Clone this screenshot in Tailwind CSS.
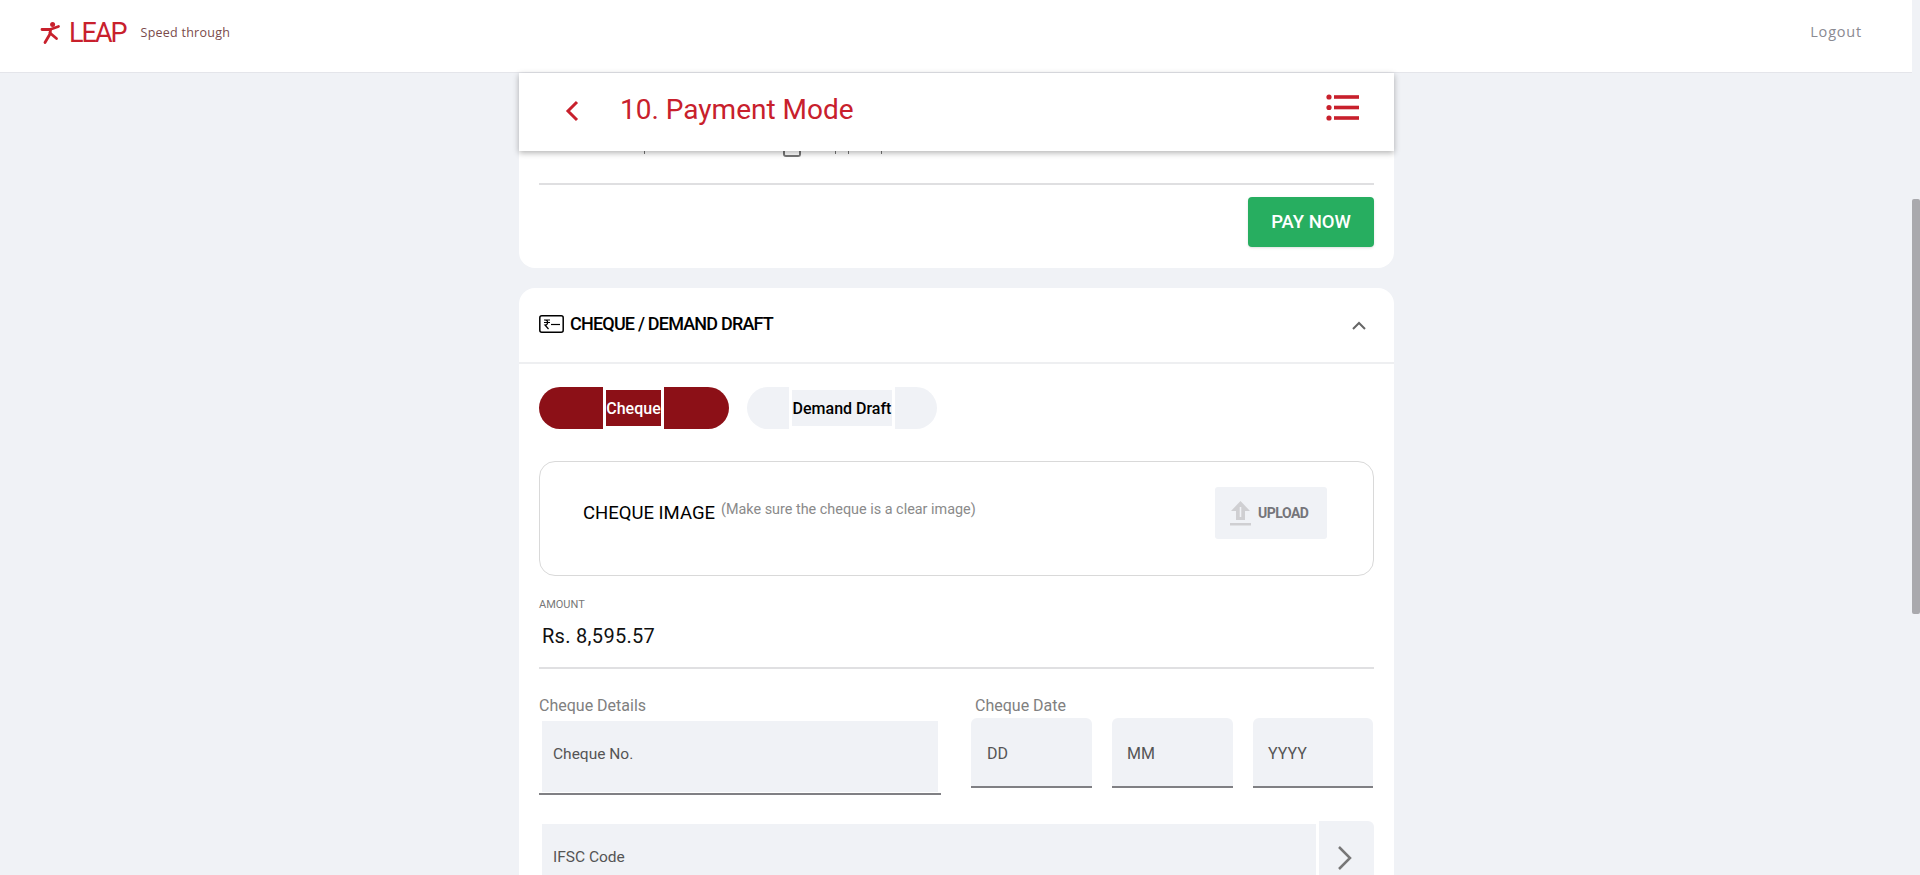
<!DOCTYPE html>
<html lang="en">
<head>
<meta charset="utf-8">
<title>LEAP - Payment Mode</title>
<script src="https://cdn.jsdelivr.net/npm/@tailwindcss/browser@4"></script>
</head>
<body class="h-[875px] overflow-hidden bg-[#f0f2f6] font-['Roboto',sans-serif]">
<div class="flex h-[875px]">
  <div class="w-[1912px] h-[875px] overflow-hidden">
    <header class="h-[73px] bg-white border-b border-[#e4e5ea] flex items-center">
      <svg class="ml-[40px] mt-[-7px] w-[24px] h-[24px] text-[#c8202c]" viewBox="0 0 24 24" fill="none" stroke="currentColor" stroke-width="2.8" stroke-linecap="round" stroke-linejoin="round">
        <circle cx="12.6" cy="3.4" r="2.5" fill="currentColor" stroke="none"/>
        <path d="M2 8.5H10L18.5 5.5"/>
        <path d="M10.5 8.5L10 13L5 21.5"/>
        <path d="M10 12L16.5 17.5"/>
      </svg>
      <span class="ml-[5px] mt-[-7px] text-[27px] leading-[32px] font-normal tracking-[-2px] text-[#c8202c]">LEAP</span>
      <span class="ml-[15px] mt-[7px] mb-[14px] text-[12.5px] leading-[20px] tracking-[0.25px] text-[#7a4a4a] font-['Open_Sans',sans-serif]">Speed through</span>
      <span class="ml-auto mr-[50px] mt-[-9px] text-[14.5px] leading-[20px] tracking-[0.8px] text-[#8a8a92] font-['Open_Sans',sans-serif]">Logout</span>
    </header>

    <main class="ml-[519px] w-[875px]">
      <div class="relative z-10 h-[78px] bg-white shadow-[0_2px_6px_rgba(0,0,0,0.3)] flex items-center">
        <svg class="ml-[46px] mb-[3px] w-[14px] h-[22px] text-[#c8202c]" viewBox="0 0 14 22" fill="none" stroke="currentColor" stroke-width="3"><path d="M12 2L3 11L12 20"/></svg>
        <h1 class="ml-[41px] mb-[4px] text-[28px] leading-[36px] text-[#c8202c]">10. Payment Mode</h1>
        <svg class="ml-auto mr-[35px] mb-[8px] w-[33px] h-[28px] text-[#c8202c]" viewBox="0 0 33 28" fill="currentColor">
          <circle cx="3" cy="3" r="2.6"/><circle cx="3" cy="13.5" r="2.6"/><circle cx="3" cy="24" r="2.6"/>
          <rect x="8" y="1.2" width="25" height="3.6"/><rect x="8" y="11.7" width="25" height="3.6"/><rect x="8" y="22.2" width="25" height="3.6"/>
        </svg>
      </div>

      <section class="bg-white rounded-b-2xl px-5 pb-[21px]">
        <div class="h-[6px] flex items-start overflow-hidden">
          <span class="ml-[105px] w-[1px] h-[3px] bg-[#777]"></span>
          <span class="ml-[138px] w-[18px] h-[6px] border-2 border-t-0 border-[#777] rounded-b-[3px]"></span>
          <span class="ml-[34px] w-[1px] h-[3px] bg-[#777]"></span>
          <span class="ml-[12px] w-[1px] h-[3px] bg-[#777]"></span>
          <span class="ml-[32px] w-[1px] h-[3px] bg-[#777]"></span>
        </div>
        <div class="mt-[26px] h-[2px] bg-[#dfdfe1]"></div>
        <div class="mt-[12px] flex justify-end">
          <button class="w-[126px] h-[50px] rounded-[4px] bg-[#27ae60] text-white text-[18.5px] font-medium shadow-sm pt-[2px]">PAY NOW</button>
        </div>
      </section>

      <section class="mt-5 bg-white rounded-t-2xl">
        <div class="h-[76px] border-b-2 border-[#eeeff1] px-5 flex items-center">
          <svg class="w-[25px] h-[18px] mb-[2px] text-black" viewBox="0 0 25 18" fill="none" stroke="currentColor" stroke-width="1.5">
            <rect x="0.8" y="0.8" width="23.4" height="16.4" rx="2"/>
            <path d="M5 5H11M5 7.5H11M6 5C9.5 5 9.5 10 6 10L9.5 14" stroke-width="1.2"/>
            <path d="M12 9.5H21" stroke-width="1.2"/>
          </svg>
          <h2 class="ml-[6px] mb-[2px] text-[18px] leading-[24px] font-medium tracking-[-0.8px] text-black">CHEQUE / DEMAND DRAFT</h2>
          <svg class="ml-auto mr-[8px] w-[14px] h-[9px] text-[#666]" viewBox="0 0 14 9" fill="none" stroke="currentColor" stroke-width="2"><path d="M1 8L7 2L13 8"/></svg>
        </div>

        <div class="px-5 pt-[23px]">
          <div class="flex gap-[18px]">
            <div class="w-[190px] h-[42px] rounded-full bg-[#8c1017] flex items-center pl-[64px]">
              <span class="w-[61px] h-[42px] border-[3px] border-white bg-[#8c1017] text-white text-[16px] font-medium flex items-center justify-center pt-[1px]">Cheque</span>
            </div>
            <div class="w-[190px] h-[42px] rounded-full bg-[#f0f2f6] flex items-center justify-center">
              <span class="w-[106px] h-[42px] border-[3px] border-white bg-[#f0f2f6] text-black text-[16px] font-medium flex items-center justify-center pt-[1px]">Demand Draft</span>
            </div>
          </div>

          <div class="mt-[32px] h-[115px] rounded-2xl border border-[#d9d9d9] flex items-center pl-[43px] pr-[46px] pb-[11px]">
            <span class="text-[18.5px] leading-[24px] text-black">CHEQUE IMAGE</span>
            <span class="ml-[6px] mb-[7px] text-[14.4px] leading-[20px] text-[#8a8a8a]">(Make sure the cheque is a clear image)</span>
            <button class="ml-auto w-[112px] h-[52px] rounded-[3px] bg-[#f0f2f6] flex items-center pl-[15px]">
              <svg class="w-[21px] h-[25px] text-[#cfcfd2]" viewBox="0 0 21 25" fill="currentColor">
                <path d="M10.5 0L20 10H15V19H6V10H1Z"/>
                <path d="M10.5 6V16" stroke="#f0f2f6" stroke-width="1.6"/>
                <rect x="0" y="22" width="21" height="2.5"/>
              </svg>
              <span class="ml-[7px] text-[14px] font-bold tracking-[-0.5px] text-[#75757a]">UPLOAD</span>
            </button>
          </div>

          <div class="mt-[21px] text-[11px] leading-[16px] text-[#777]">AMOUNT</div>
          <div class="mt-[9px] ml-[3px] text-[20px] leading-[28px] tracking-[0.3px] text-[#111]">Rs. 8,595.57</div>
          <div class="mt-[17px] h-[2px] bg-[#e0e0e2]"></div>

          <div class="mt-[25px] flex justify-between">
            <div class="w-[402px]">
              <div class="text-[16px] leading-[24px] text-[#808080]">Cheque Details</div>
              <div class="mt-[3px] mx-[3px] h-[71px] bg-[#f0f2f6] pl-[11px] pt-[21px] text-[15.5px] leading-[24px] text-[#555]">Cheque No.</div>
              <div class="mt-[1px] h-[2px] bg-[#808084]"></div>
            </div>
            <div class="w-[403px]">
              <div class="ml-[4px] text-[16px] leading-[24px] text-[#808080]">Cheque Date</div>
              <div class="flex gap-[20px]">
                <div class="w-[121px] h-[70px] rounded-t-md bg-[#f0f2f6] border-b-2 border-[#808084] pl-[16px] pt-[24px] text-[16px] leading-[24px] text-[#555]">DD</div>
                <div class="w-[121px] h-[70px] rounded-t-md bg-[#f0f2f6] border-b-2 border-[#808084] pl-[15px] pt-[24px] text-[16px] leading-[24px] text-[#555]">MM</div>
                <div class="w-[120px] h-[70px] rounded-t-md bg-[#f0f2f6] border-b-2 border-[#808084] pl-[15px] pt-[24px] text-[16px] leading-[24px] text-[#555]">YYYY</div>
              </div>
            </div>
          </div>

          <div class="mt-[26px] flex">
            <div class="mt-[3px] ml-[3px] w-[774px] h-[100px] bg-[#f0f2f6] pl-[11px] pt-[21px] text-[15.5px] leading-[24px] text-[#555]">IFSC Code</div>
            <div class="ml-[3px] w-[55px] h-[100px] rounded-tr-md bg-[#f0f2f6] pl-[18px] pt-[24px]">
              <svg class="w-[16px] h-[26px] text-[#777]" viewBox="0 0 16 26" fill="none" stroke="currentColor" stroke-width="2.5"><path d="M2 2L13 13L2 24"/></svg>
            </div>
          </div>
        </div>
      </section>
    </main>
  </div>
  <div class="w-2 h-[875px] pt-[199px]">
    <div class="h-[415px] rounded-[2px] bg-[#a9a9ad]"></div>
  </div>
</div>
</body>
</html>
